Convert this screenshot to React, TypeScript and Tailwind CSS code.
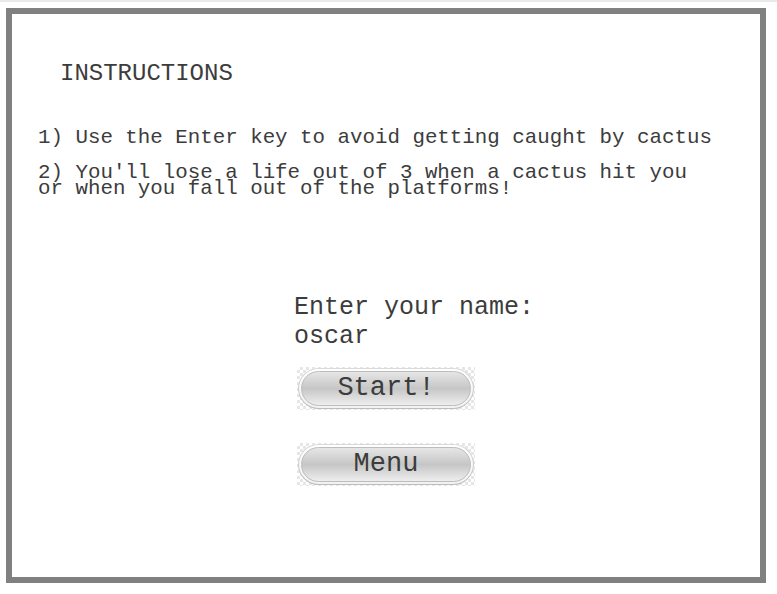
export default function App() {
  return (
    <main className="min-h-screen bg-white font-['Liberation_Mono','Courier_New',monospace] text-[#3c3c3c]">
      <div className="h-[2px] bg-[#e9e9e9]" />
      <section className="ml-[6px] mt-[6px] h-[575px] w-[760px] border-[6px] border-[#808080] bg-white">
        <div className="pl-[26px] pt-[48px]">
          <h1 className="ml-[22px] text-[24px] leading-[24px] font-normal">INSTRUCTIONS</h1>
          <p className="mt-[41px] text-[20.8px] leading-[21px]">
            1) Use the Enter key to avoid getting caught by cactus
          </p>
          <p className="mt-[17px] text-[20.8px] leading-[16px]">
            2) You'll lose a life out of 3 when a cactus hit you
            <br />
            or when you fall out of the platforms!
          </p>
        </div>

        <div className="ml-[282px] mt-[96px] text-[25px] leading-[29px]">
          <p>Enter your name:</p>
          <p>oscar</p>
        </div>

        <div className="ml-[285px] mt-[16px] flex flex-col gap-[33px]">
          <PillButton label="Start!" />
          <PillButton label="Menu" />
        </div>
      </section>
    </main>
  );
}

function PillButton({ label }: { label: string }) {
  return (
    <button className="flex h-[43px] w-[178px] bg-[image:repeating-conic-gradient(#e6e6e6_0%_25%,#ffffff_0%_50%)] bg-[length:6px_6px] p-[1px]">
      <span className="flex h-full w-full rounded-full bg-gradient-to-b from-[#dadada] to-[#bcbcbc] p-[1px]">
        <span className="flex h-full w-full rounded-full bg-gradient-to-b from-[#ffffff] to-[#f2f2f2] p-[2px]">
          <span className="flex h-full w-full items-center justify-center rounded-full border border-[#bdbdbd] bg-gradient-to-b from-[#e6e6e6] via-[#c6c6c6] to-[#eeeeee] text-[27px] leading-none text-[#3c3c3c]">
            {label}
          </span>
        </span>
      </span>
    </button>
  );
}
